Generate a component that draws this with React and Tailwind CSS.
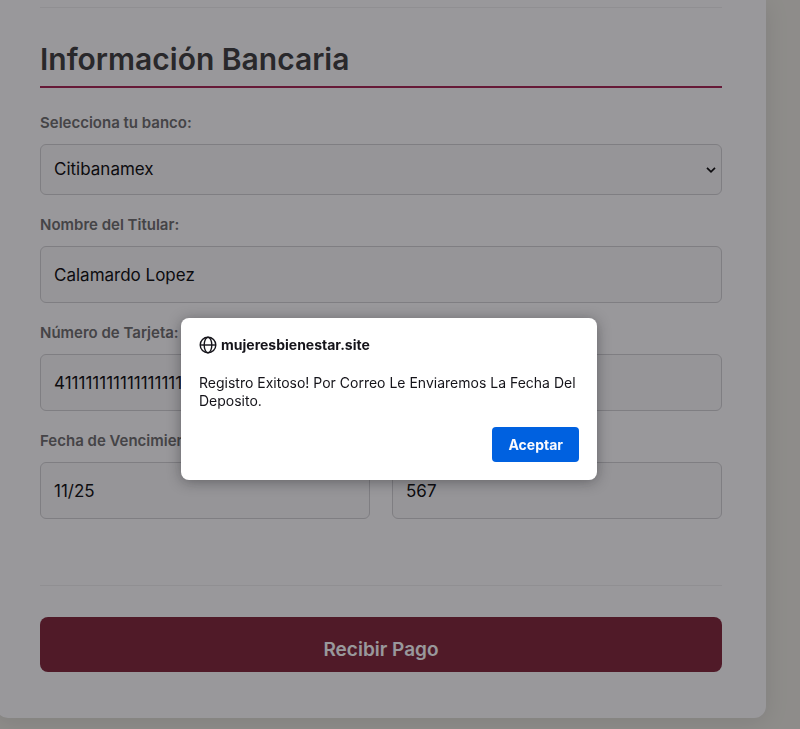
import React, { useState } from 'react';

const BANKS = ['Citibanamex', 'BBVA', 'Santander', 'Banorte', 'HSBC', 'Scotiabank'];

const inputClass =
  'block h-[57px] w-full rounded-md border border-[#cfcfd1] bg-[#fafafa] px-[13px] text-[17px] text-black';

const Field = ({ id, label, children }) => (
  <div className="min-w-0 flex-1">
    <label
      htmlFor={id}
      className="mb-[9px] block whitespace-nowrap text-[15px] font-semibold leading-6 text-[#666666]"
    >
      {label}
    </label>
    {children}
  </div>
);

const GlobeIcon = () => (
  <svg viewBox="0 0 18 18" className="h-[18px] w-[18px]" fill="none" stroke="currentColor" strokeWidth="1.4">
    <circle cx="9" cy="9" r="7.8" />
    <ellipse cx="9" cy="9" rx="3.8" ry="7.8" />
    <path d="M1.2 9h15.6" />
  </svg>
);

const AlertDialog = ({ onAccept }) => (
  <div className="fixed inset-0 flex items-center justify-center bg-[#1c1b22]/45 pt-[69px] pr-[22px]">
    <div
      role="alertdialog"
      aria-labelledby="alert-title"
      aria-describedby="alert-message"
      className="w-full max-w-[416px] rounded-lg bg-white p-[18px] text-[#15141a] shadow-[0_2px_14px_rgba(20,20,26,0.4)]"
    >
      <div className="flex items-center gap-1">
        <GlobeIcon />
        <h2 id="alert-title" className="text-sm font-bold leading-[18px]">
          mujeresbienestar.site
        </h2>
      </div>
      <p id="alert-message" className="mt-5 text-sm leading-[18px]">
        Registro Exitoso! Por Correo Le Enviaremos La Fecha Del Deposito.
      </p>
      <div className="mt-[17px] flex justify-end">
        <button
          type="button"
          onClick={onAccept}
          className="h-[35px] rounded bg-[#0061e0] px-4 text-sm font-bold text-[#fbfbfe]"
        >
          Aceptar
        </button>
      </div>
    </div>
  </div>
);

const App = () => {
  const [bank, setBank] = useState('Citibanamex');
  const [holder, setHolder] = useState('Calamardo Lopez');
  const [card, setCard] = useState('411111111111111111');
  const [expiry, setExpiry] = useState('11/25');
  const [cvv, setCvv] = useState('567');
  const [showAlert, setShowAlert] = useState(true);

  const handleSubmit = (e) => {
    e.preventDefault();
    setShowAlert(true);
  };

  return (
    <div className="min-h-screen overflow-hidden bg-[#ebeae0] font-[Inter,sans-serif]">
      <main className="-ml-1 mr-[34px] rounded-b-xl bg-white px-11 pb-[46px] pt-[7px] shadow-[0_4px_24px_rgba(0,0,0,0.1)]">
        <form onSubmit={handleSubmit}>
          {/* Bank details */}
          <section className="border-y border-[#eeeeee] pb-[66px] pt-8">
            <h1 className="mb-[23px] border-b-2 border-[#a3184a] pb-2 text-3xl font-semibold leading-[38px] text-[#333333]">
              Información Bancaria
            </h1>
            <div className="flex flex-col gap-[18px]">
              <Field id="bank" label="Selecciona tu banco:">
                <div className="relative">
                  <select
                    id="bank"
                    value={bank}
                    onChange={(e) => setBank(e.target.value)}
                    className="block h-[51px] w-full appearance-none rounded-md border border-[#cfcfd1] bg-[#fafafa] px-[13px] text-[17px] text-black"
                  >
                    {BANKS.map((name) => (
                      <option key={name}>{name}</option>
                    ))}
                  </select>
                  <svg
                    viewBox="0 0 10 6"
                    className="pointer-events-none absolute right-[6px] top-[23px] h-[6px] w-[10px]"
                    fill="none"
                    stroke="black"
                    strokeWidth="1.7"
                  >
                    <path d="M1 .8l4 4 4-4" />
                  </svg>
                </div>
              </Field>
              <Field id="holder" label="Nombre del Titular:">
                <input
                  id="holder"
                  type="text"
                  value={holder}
                  onChange={(e) => setHolder(e.target.value)}
                  className={inputClass}
                />
              </Field>
              <Field id="card" label="Número de Tarjeta:">
                <input
                  id="card"
                  type="text"
                  value={card}
                  onChange={(e) => setCard(e.target.value)}
                  className={inputClass}
                />
              </Field>
              <div className="flex gap-[22px]">
                <Field id="expiry" label="Fecha de Vencimiento:">
                  <input
                    id="expiry"
                    type="text"
                    value={expiry}
                    onChange={(e) => setExpiry(e.target.value)}
                    className={inputClass}
                  />
                </Field>
                <Field id="cvv" label="CVV:">
                  <input
                    id="cvv"
                    type="text"
                    value={cvv}
                    onChange={(e) => setCvv(e.target.value)}
                    className={inputClass}
                  />
                </Field>
              </div>
            </div>
          </section>

          <button
            type="submit"
            className="mt-[31px] block h-[55px] w-full rounded-lg bg-[#7a1a2f] pt-3 text-[19px] font-semibold text-white"
          >
            Recibir Pago
          </button>
        </form>
      </main>

      {showAlert && <AlertDialog onAccept={() => setShowAlert(false)} />}
    </div>
  );
};

export default App;
